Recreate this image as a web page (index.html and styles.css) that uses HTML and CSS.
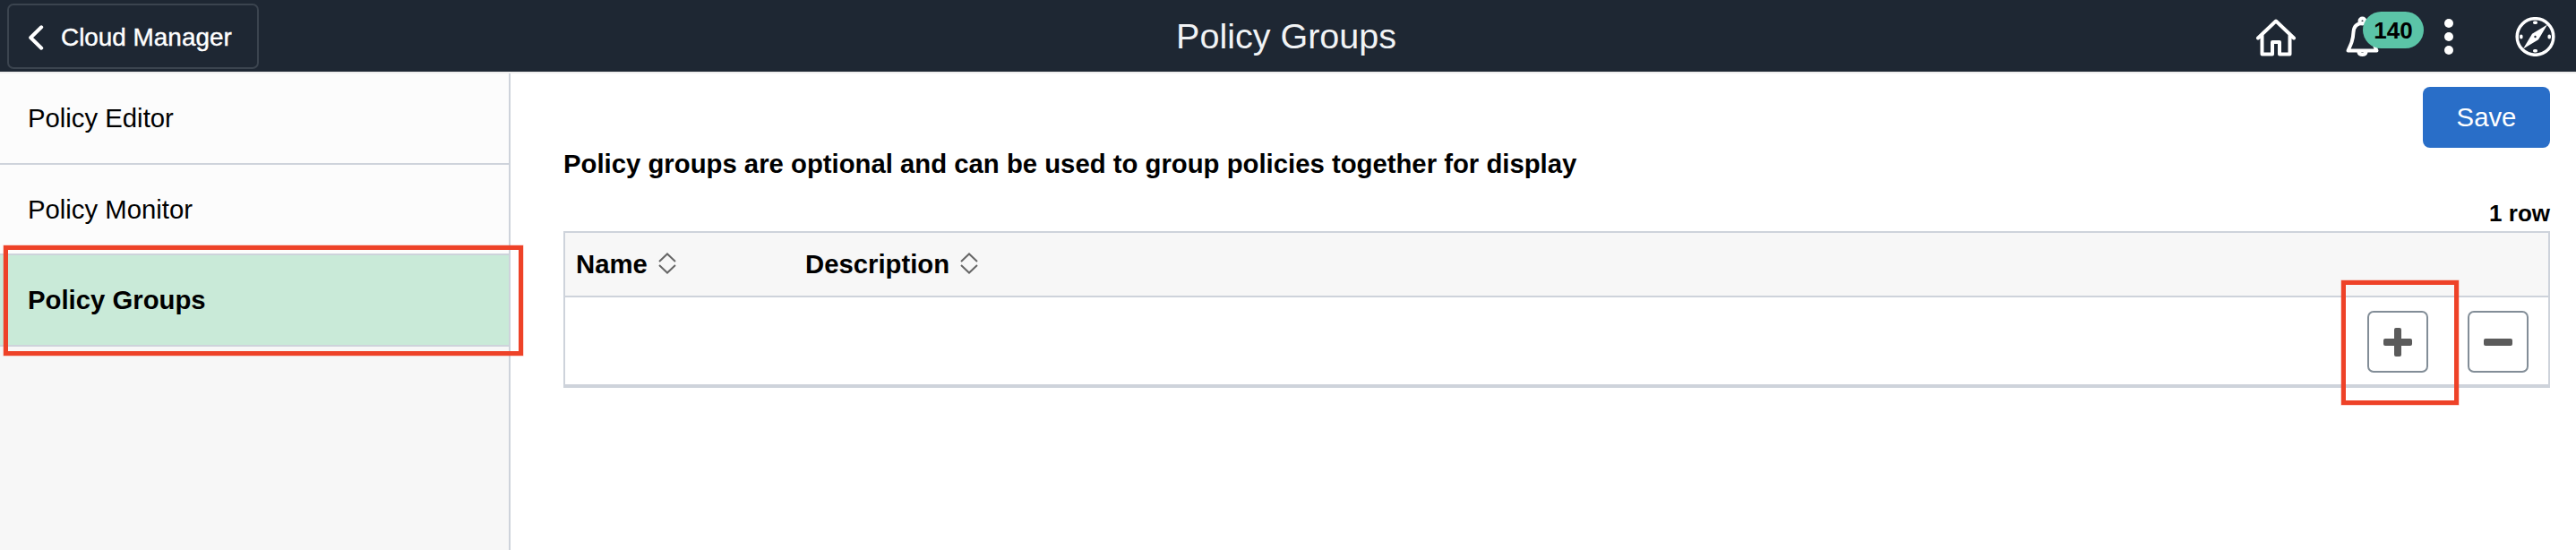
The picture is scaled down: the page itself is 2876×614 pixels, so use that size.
FILE: index.html
```
<!DOCTYPE html>
<html lang="en">
<head>
<meta charset="utf-8">
<title>Policy Groups</title>
<link rel="stylesheet" href="styles.css">
</head>
<body>
<header class="banner">
  <div class="banner-start">
    <button class="back" type="button">
      <svg class="back-icon" width="18" height="28" viewBox="0 0 18 28"><path d="M15.2 2.3 3.2 14l12 11.7"/></svg>
      <span>Cloud Manager</span>
    </button>
  </div>
  <h1 class="banner-title">Policy Groups</h1>
  <nav class="banner-actions">
    <svg class="icon home" width="46" height="44" viewBox="0 0 46 44"><path d="M3 23.5 23 4.5l20 19M7.5 20v21.500h11.500V28h8v13.500h11.500V20"/></svg>
    <div class="alerts">
      <svg class="icon" width="40" height="46" viewBox="0 0 40 46"><circle cx="19.500" cy="5.500" r="3"/><path d="M19.500 8c-6.500 0-9.500 4-10 10C9 27 7 31 3.500 38.500h32C32 31 30.500 27 29.500 18c-.5-6-3.500-10-10-10ZM15.500 40.500c.8 3.300 7.200 3.300 8 0"/></svg>
      <span class="badge">140</span>
    </div>
    <svg class="dots" width="10" height="40" viewBox="0 0 10 40"><circle cx="5" cy="5" r="5"/><circle cx="5" cy="20" r="5"/><circle cx="5" cy="35" r="5"/></svg>
    <svg class="icon compass" width="45" height="44" viewBox="0 0 45 44"><circle cx="22.500" cy="22" r="20.300"/><path class="marks" d="M21.700 6.300h1.600M21.700 37.700h1.600M6.800 21.200v1.600M38.200 21.200v1.600"/><path class="needle" d="M36 8.500 26 25.200 9 35.500 19 18.800Z"/><circle class="hub" cx="22.500" cy="22" r="1.200"/></svg>
  </nav>
</header>
<div class="page">
  <aside class="sidebar">
    <a class="side-item">Policy Editor</a>
    <a class="side-item second">Policy Monitor</a>
    <a class="side-item selected">Policy Groups</a>
    <div class="callout callout-side"></div>
  </aside>
  <main class="content">
    <div class="toolbar"><button class="save" type="button">Save</button></div>
    <p class="intro">Policy groups are optional and can be used to group policies together for display</p>
    <p class="count">1 row</p>
    <section class="grid">
      <div class="grid-head">
        <div class="col-name">Name<svg class="sort" width="20" height="24" viewBox="0 0 20 24"><path d="M1 10 10 1.500 19 10M1 14l9 8.500 9-8.500"/></svg></div>
        <div class="col-desc">Description<svg class="sort" width="20" height="24" viewBox="0 0 20 24"><path d="M1 10 10 1.500 19 10M1 14l9 8.500 9-8.500"/></svg></div>
      </div>
      <div class="grid-row">
        <div class="add">
          <button class="square" type="button" aria-label="Add"><svg width="32" height="32"><rect x="0" y="12" width="32" height="8" rx="2"/><rect x="12" y="0" width="8" height="32" rx="2"/></svg></button>
          <div class="callout callout-add"></div>
        </div>
        <button class="square" type="button" aria-label="Remove"><svg width="32" height="32"><rect x="0" y="12" width="32" height="8" rx="2"/></svg></button>
      </div>
    </section>
  </main>
</div>
</body>
</html>
```

FILE: styles.css
```
* { box-sizing: border-box; }
body { margin: 0; height: 614px; overflow: hidden; display: flex; flex-direction: column; background: #fff; color: #000; font-family: "Liberation Sans", Arial, sans-serif; font-size: 29.3px; }
button { font: inherit; margin: 0; padding: 0; }
h1, p { margin: 0; }
svg { display: block; flex: none; }

.banner { height: 82px; flex: none; display: grid; grid-template-columns: 1fr auto 1fr; background: #1e2733; border-bottom: 2px solid #efefef; }
.banner-start { padding: 4px 8px; }
.back { width: 281px; height: 73px; display: flex; align-items: center; gap: 19px; padding: 3px 0 0 21px; border: 2px solid #3b444f; border-radius: 7px; background: none; color: #fff; font-size: 27.9px; white-space: nowrap; }
.back span { -webkit-text-stroke: 0.4px #fff; }
.back-icon { fill: none; stroke: #fff; stroke-width: 4; stroke-linecap: round; stroke-linejoin: round; }
.banner-title { margin-right: 4px; font-size: 39.5px; font-weight: 400; line-height: 80px; color: #f1f3f5; }
.banner-actions { display: flex; align-items: center; justify-content: flex-end; padding-right: 23px; }
.icon { fill: none; stroke: #fff; stroke-width: 4; stroke-linecap: round; stroke-linejoin: round; }
.alerts { position: relative; width: 88px; margin: 0 23px 0 54px; }
.badge { position: absolute; left: 20px; top: -5px; width: 68px; height: 41px; border-radius: 21px; background: #5bc4a7; color: #000; font-size: 26px; font-weight: 700; line-height: 43px; text-align: center; }
.dots { fill: #fff; margin-right: 69px; }
.compass { stroke-width: 3.5px; }
.marks { stroke-width: 3.5px; }
.needle { fill: #fff; stroke: none; }
.hub { fill: #1e2733; stroke: none; }

.page { flex: 1; display: flex; min-height: 0; }
.sidebar { position: relative; width: 570px; flex: none; background: #f7f7f7; border-right: 2px solid #ced3db; }
.side-item { display: block; height: 102px; padding: 1px 0 0 31px; border-bottom: 2px solid #ced3db; background: #fcfcfc; line-height: 98px; }
.side-item.second { height: 101px; }
.side-item.selected { background: #c9ead8; font-weight: 700; }
.callout { position: absolute; border: 5px solid #ee4228; box-shadow: 0 0 0 0.5px rgba(238, 66, 40, 0.4); pointer-events: none; }
.callout-side { left: 4px; top: 192px; width: 580px; height: 123px; }

.content { flex: 1; padding: 15px 29px 0 59px; }
.toolbar { display: flex; justify-content: flex-end; }
.save { width: 142px; height: 68px; border: 0; border-radius: 8px; background: #296ec8; color: #fff; }
.intro { padding-top: 1px; font-weight: 700; line-height: 34px; }
.count { margin-top: 23px; height: 35px; font-size: 26px; font-weight: 700; line-height: 30px; text-align: right; }
.grid { border: 2px solid #ced3db; border-bottom-width: 4px; }
.grid-head { display: flex; align-items: center; height: 72px; padding-left: 12px; background: #f7f7f7; border-bottom: 2px solid #ced3db; font-weight: 700; }
.col-name, .col-desc { display: flex; align-items: center; gap: 12px; }
.col-name { width: 256px; }
.sort { fill: none; stroke: #666; stroke-width: 2; margin-bottom: 3px; }
.grid-row { display: flex; justify-content: flex-end; gap: 44px; height: 97px; padding: 15px 22px 0 0; }
.add { position: relative; }
.square { width: 68px; height: 69px; display: flex; align-items: center; justify-content: center; border: 2px solid #828d97; border-radius: 7px; background: #fff; fill: #5b5b5b; }
.callout-add { left: -29px; top: -34px; width: 131px; height: 139px; }
```
